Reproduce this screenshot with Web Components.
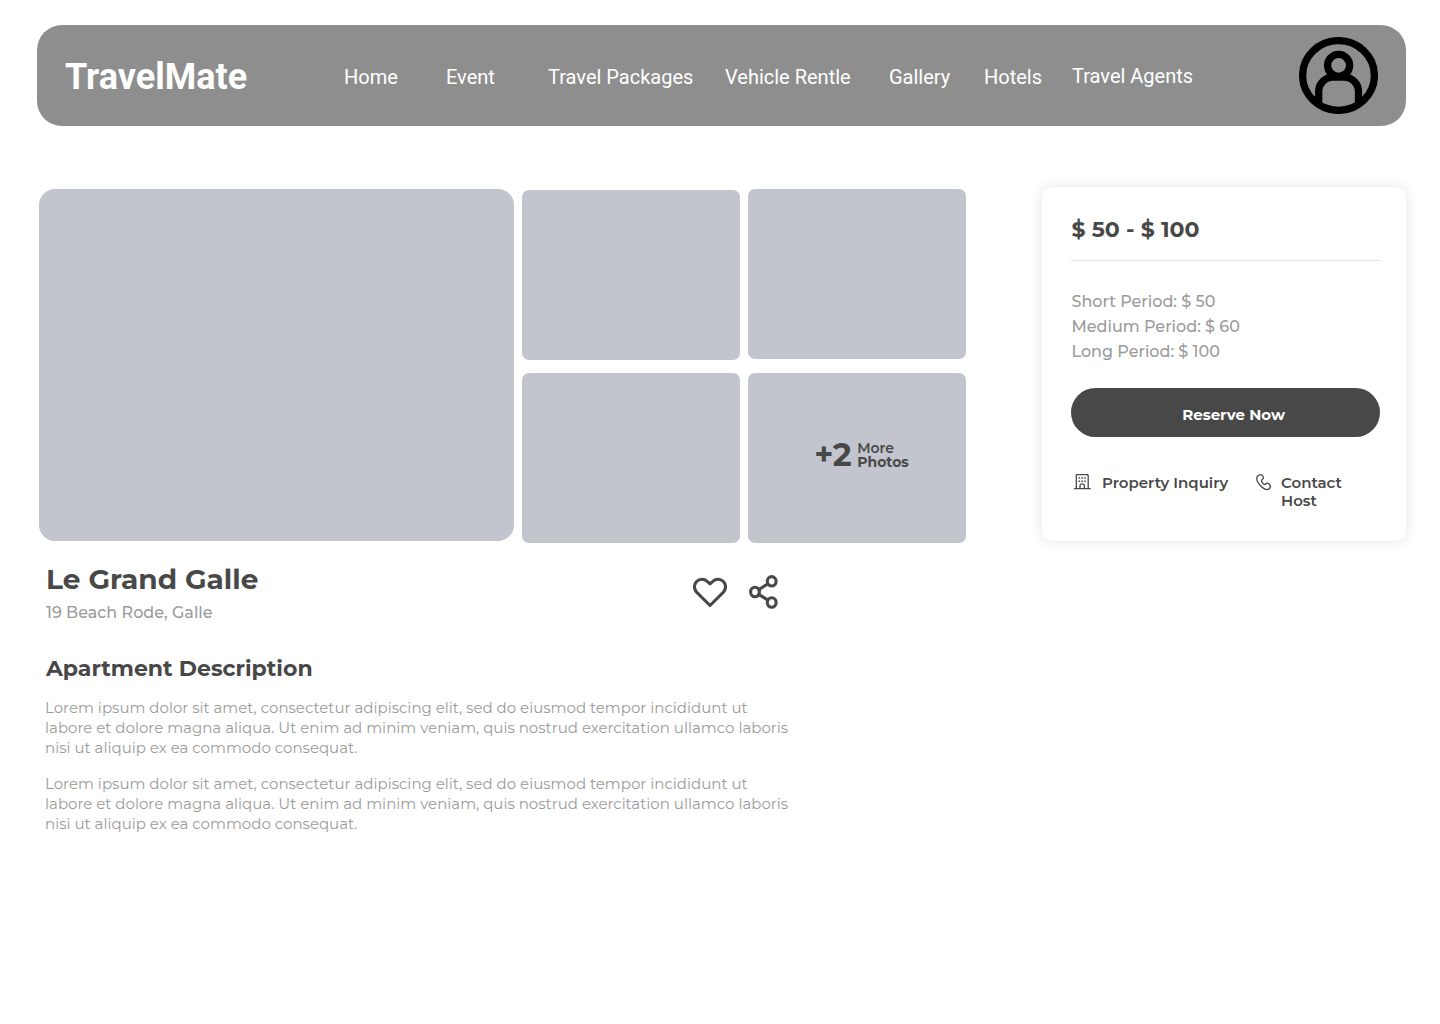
<!DOCTYPE html>
<html lang="en">
<head>
<meta charset="utf-8">
<title>TravelMate – Le Grand Galle</title>
<style>
html,body{margin:0;background:#fff}
body{width:1440px;height:1024px;overflow:hidden;font-family:Montserrat,Inter,sans-serif;color:#484848}
</style>
</head>
<body>
<travel-page>
  <site-header slot="header"></site-header>
  <photo-gallery slot="main"></photo-gallery>
  <property-info slot="main"></property-info>
  <booking-card slot="aside"></booking-card>
</travel-page>
<script>
const define = (name, html) => {
  const tpl = document.createElement('template');
  tpl.innerHTML = html;
  customElements.define(name, class extends HTMLElement {
    constructor() {
      super();
      this.attachShadow({mode: 'open'}).append(tpl.content.cloneNode(true));
    }
  });
};

define('travel-page', `
<style>
:host{display:block;padding:25px 34px 0 37px}
.cols{display:flex;justify-content:space-between;align-items:flex-start;margin-top:60px}
main{width:929px}
</style>
<slot name="header"></slot>
<div class="cols"><main><slot name="main"></slot></main><slot name="aside"></slot></div>`);

define('site-header', `
<style>
:host{display:flex;align-items:center;box-sizing:border-box;height:101px;border-radius:25px;background:#8e8e8e;color:#fff;font-family:Roboto,sans-serif;padding:0 28px}
.logo{width:279px;font-weight:700;font-size:36px;line-height:42px;padding-top:2px}
nav{flex:1;display:grid;grid-template-columns:102px 102px 177px 164px 95px 88px auto;font-size:20px;line-height:24px;white-space:nowrap;padding-top:3px}
.up{margin-top:-1px}
svg{width:79px;height:77px;flex:none}
</style>
<div class="logo">TravelMate</div>
<nav><span>Home</span><span>Event</span><span>Travel Packages</span><span>Vehicle Rentle</span><span>Gallery</span><span>Hotels</span><span class="up">Travel Agents</span></nav>
<svg viewBox="0 0 79 77" fill="none" stroke="#000" stroke-width="7.3"><ellipse cx="39.5" cy="38.5" rx="35.9" ry="34.9"/><circle cx="39.6" cy="28.4" r="11"/><path d="M19.7 67V54.7A14.5 14.5 0 0 1 34.2 40.2H45A14.5 14.5 0 0 1 59.5 54.7V67"/></svg>`);

define('photo-tile', `
<style>
:host{display:flex;align-items:center;justify-content:center;box-sizing:border-box;background:#c2c5cd;border-radius:7px;width:218px;height:170px}
</style><slot></slot>`);

define('more-photos', `
<style>
:host{display:flex;align-items:center;gap:6px;padding:0 0 7px 9px}
b{font-size:32px;line-height:36px;width:37px}
div{font-size:14px;line-height:14px;font-weight:600;padding-top:1px}
span{display:block}
.s{font-weight:700}
</style><b>+2</b><div><span>More</span><span class="s">Photos</span></div>`);

define('photo-gallery', `
<style>
:host{display:flex;gap:8px;padding:3px 0 0 2px}
.big{width:475px;height:352px;border-radius:16px}
.col{display:flex;flex-direction:column}
.a{padding-top:1px;gap:13px}
.b{gap:14px}
</style>
<photo-tile class="big"></photo-tile>
<div class="col a"><photo-tile></photo-tile><photo-tile></photo-tile></div>
<div class="col b"><photo-tile></photo-tile><photo-tile><more-photos></more-photos></photo-tile></div>`);

define('property-info', `
<style>
:host{display:block;padding:18px 0 0 8px}
.top{display:flex;justify-content:space-between;width:733px}
h1{margin:0;font-size:28px;line-height:36px;padding-left:1px}
.addr{font-size:16px;line-height:20px;font-weight:500;color:#9b9b9b;margin-top:6px;padding-left:1px}
.acts{display:flex;gap:22px;padding-top:13px}
h2{margin:32px 0 0 1px;font-size:22px;line-height:28px}
p{margin:16px 0 0;font-size:15px;line-height:20px;color:#9b9b9b;white-space:nowrap}
h2+p{margin-top:15px}
p span{display:block}
svg{display:block;fill:none;stroke:#484848;stroke-width:3.1;stroke-linecap:round;stroke-linejoin:round}
</style>
<div class="top"><div><h1>Le Grand Galle</h1><div class="addr">19 Beach Rode, Galle</div></div>
<div class="acts">
<svg width="34" height="36" viewBox="0 0 34 36"><path d="M17 31.5L3.8 18.4C.7 15.1.8 10.4 3.6 7.5C6.6 4.5 11.4 4.6 14.2 7.3L17 9.8L19.8 7.3C22.6 4.6 27.4 4.5 30.4 7.5C33.2 10.4 33.3 15.1 30.2 18.4Z"/></svg>
<svg width="29" height="36" viewBox="0 0 29 36"><ellipse cx="6" cy="18" rx="4.4" ry="4.7"/><ellipse cx="22.7" cy="7.3" rx="4.4" ry="4.7"/><ellipse cx="22.7" cy="28.5" rx="4.4" ry="4.7"/><path d="M9.8 15.6L18.9 9.8M9.8 20.4L18.9 26.1"/></svg>
</div></div>
<h2>Apartment Description</h2>
<p><span>Lorem ipsum dolor sit amet, consectetur adipiscing elit, sed do eiusmod tempor incididunt ut</span><span>labore et dolore magna aliqua. Ut enim ad minim veniam, quis nostrud exercitation ullamco laboris</span><span>nisi ut aliquip ex ea commodo consequat.</span></p>
<p><span>Lorem ipsum dolor sit amet, consectetur adipiscing elit, sed do eiusmod tempor incididunt ut</span><span>labore et dolore magna aliqua. Ut enim ad minim veniam, quis nostrud exercitation ullamco laboris</span><span>nisi ut aliquip ex ea commodo consequat.</span></p>`);

define('booking-card', `
<style>
:host{display:block;box-sizing:border-box;width:364px;height:354px;margin-top:1px;border-radius:10px;background:#fff;box-shadow:0 0 14px rgba(60,75,85,.15);padding:28px 26px 0 29px}
.price{font-size:22px;font-weight:700;line-height:30px;padding-left:.5px}
.rule{height:1px;background:#e2e2e2;margin-top:15px}
.rates{margin-top:28px;padding-left:.5px;font-size:16px;font-weight:500;line-height:25px;color:#9b9b9b}
button{display:block;width:309px;height:49px;margin:24px 0 0 -.4px;border:0;border-radius:25px;background:#484848;color:#fff;font:700 15px Montserrat,Inter,sans-serif;padding:4px 0 0 17px}
.links{display:flex;align-items:flex-start;margin-top:37px;padding-left:3px;font-size:15px;line-height:18px;font-weight:600}
.links span{white-space:nowrap}
svg{flex:none;fill:none;stroke:#484848;stroke-width:1.3;stroke-linejoin:round;stroke-linecap:round}
.inq{width:153px;margin-left:11px}
.c{margin-left:10px}
</style>
<div class="price">$ 50 - $ 100</div><div class="rule"></div>
<div class="rates"><div>Short Period: $ 50</div><div>Medium Period: $ 60</div><div>Long Period: $ 100</div></div>
<button>Reserve Now</button>
<div class="links">
<svg width="17" height="17" viewBox=".5 .5 17 17"><path d="M1 15.2H16.8M2.8 15V2.3Q2.8 1 4.1 1H13.4Q14.7 1 14.7 2.3V15M6.5 15V12.2Q6.5 10.3 8.7 10.3T10.9 12.2V15"/><path stroke-linecap="butt" stroke-width="1.5" d="M5 4.5H6.6M7.8 4.5H9.4M10.6 4.5H12.2M5 7.7H6.6M7.8 7.7H9.4M10.6 7.7H12.2"/></svg>
<span class="inq">Property Inquiry</span>
<svg width="16" height="17" viewBox="-.7 0 16 17"><path d="M3.2 1.2C4.7.4 6.3.7 7.2 2.2C8.1 3.8 7.8 4.8 6.5 5.5C5.2 6.3 6 7.8 7 9.1C8 10.4 9.1 11 10 10C11 8.9 12.3 8.9 13.6 10.2C15.1 11.7 15 13.2 13.7 14.5C11.7 16.3 8.3 15.3 5.3 12.3C2.3 9.2.9 6.1 1 4C1.1 2.7 2 1.8 3.2 1.2Z"/></svg>
<span class="c">Contact<br>Host</span>
</div>`);
</script>
</body>
</html>
